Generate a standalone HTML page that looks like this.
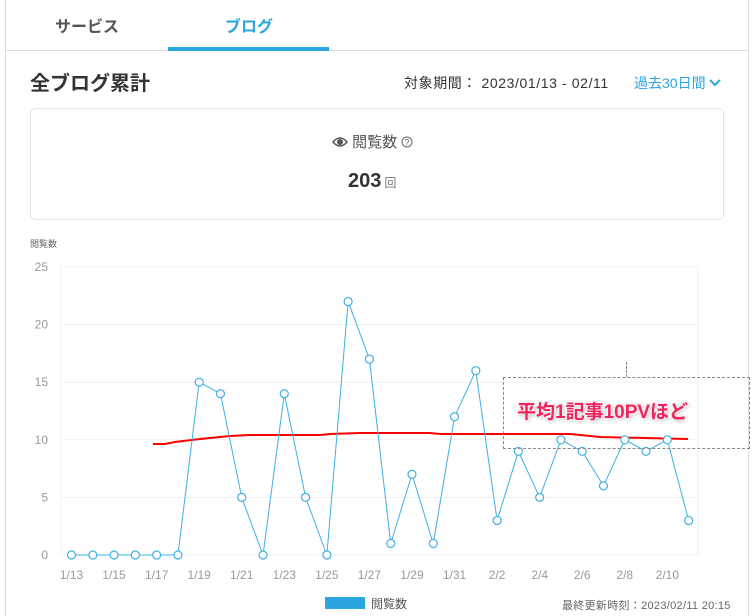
<!DOCTYPE html>
<html><head><meta charset="utf-8"><style>
body{margin:0;width:754px;height:616px;background:#fff;font-family:"Liberation Sans","Noto Sans CJK JP",sans-serif;position:relative;overflow:hidden}
.abs{position:absolute}
</style></head><body>
<div class="abs" style="left:5px;top:0;width:1px;height:616px;background:#ddd"></div>
<div class="abs" style="left:748px;top:0;width:1px;height:616px;background:#ddd"></div>
<div class="abs" style="left:5px;top:50px;width:744px;height:1px;background:#ddd"></div>
<div class="abs" style="left:55px;top:13px;font-size:16px;font-weight:bold;color:#555">サービス</div>
<div class="abs" style="left:225px;top:13px;font-size:16px;font-weight:bold;color:#2aa5e0">ブログ</div>
<div class="abs" style="left:168px;top:47px;width:161px;height:4px;background:#2aa5e0"></div>
<div class="abs" style="left:30px;top:67px;font-size:20px;font-weight:bold;color:#333">全ブログ累計</div>
<div class="abs" style="left:404px;top:73px;font-size:14px;color:#333;letter-spacing:0.6px">対象期間： 2023/01/13 - 02/11</div>
<div class="abs" style="left:634px;top:73px;font-size:14px;color:#2aa5e0">過去30日間 <svg width="12" height="10" style="vertical-align:0"><path d="M1 2 L6 7 L11 2" stroke="#2aa5e0" stroke-width="2" fill="none"/></svg></div>
<div class="abs" style="left:30px;top:108px;width:692px;height:110px;border:1px solid #e5e5e5;border-radius:6px"></div>
<div class="abs" style="left:332px;top:131px;font-size:15px;color:#555"><svg width="16" height="12" style="vertical-align:-1px"><path d="M1 6 Q8 -2 15 6 Q8 14 1 6Z" fill="none" stroke="#555" stroke-width="1.5"/><circle cx="8" cy="6" r="3" fill="#555"/></svg> 閲覧数 <svg width="12" height="12" style="vertical-align:-1px"><circle cx="6" cy="6" r="5" fill="none" stroke="#666"/><text x="6" y="9.5" font-size="9" text-anchor="middle" fill="#666" font-family="Liberation Sans">?</text></svg></div>
<div class="abs" style="left:348px;top:170px;font-size:20px;font-weight:bold;color:#333">203<span style="font-size:12px;color:#777;font-weight:normal;margin-left:3px">回</span></div>
<div class="abs" style="left:30px;top:237px;font-size:9px;color:#666">閲覧数</div>
<svg id="ch" class="abs" style="left:0;top:0" width="754" height="616" font-family="Liberation Sans" font-size="12"></svg>
<div class="abs" style="left:325px;top:597px;width:40px;height:12px;background:#2aa5e0"></div>
<div class="abs" style="left:371px;top:595px;font-size:12px;color:#555">閲覧数</div>
<div class="abs" style="left:562px;top:597px;font-size:11px;color:#666;letter-spacing:0.3px">最終更新時刻：2023/02/11 20:15</div>
<div class="abs" style="left:503px;top:377px;width:245px;height:70px;border:1px dashed #888"></div>
<div class="abs" style="left:626px;top:362px;width:0;height:15px;border-left:1px dashed #888"></div>
<div class="abs" style="left:517px;top:397px;font-size:19px;font-weight:bold;color:#f0245e;text-shadow:0 0 2px #fff,0 0 3px #fff,1px 1px 4px #999">平均1記事10PVほど</div>
<script>
var s='',v=[0,0,0,0,0,0,15,14,5,0,14,5,0,22,17,1,7,1,12,16,3,9,5,10,9,6,10,9,10,3];
function X(i){return 71.5+i*21.28}function Y(n){return 555-n*11.52}
for(var k=0;k<=5;k++){var y=Y(k*5);s+='<line x1="61" x2="698" y1="'+y+'" y2="'+y+'" stroke="#f0f0f0"/>';s+='<text x="48" y="'+(y+4)+'" text-anchor="end" fill="#999">'+(k*5)+'</text>';}
s+='<line x1="61" x2="61" y1="267" y2="555" stroke="#f0f0f0"/><line x1="698" x2="698" y1="267" y2="555" stroke="#f0f0f0"/>';
var lab=['1/13','1/15','1/17','1/19','1/21','1/23','1/25','1/27','1/29','1/31','2/2','2/4','2/6','2/8','2/10'];
for(var i=0;i<15;i++)s+='<text x="'+X(i*2)+'" y="579" text-anchor="middle" fill="#999">'+lab[i]+'</text>';
s+='<polyline fill="none" stroke="#f00" stroke-width="2" points="153,444 165,444 175,442 200,439 230,436 250,435 320,435 330,434 360,433 430,433 440,434 570,434 580,435 600,437 688,439"/>';
var p='';for(i=0;i<30;i++)p+=X(i)+','+Y(v[i])+' ';
s+='<polyline fill="none" stroke="#3fb0e3" stroke-width="1" points="'+p+'"/>';
for(i=0;i<30;i++)s+='<circle cx="'+X(i)+'" cy="'+Y(v[i])+'" r="4" fill="#fff" stroke="#3fb0e3" stroke-width="1.2"/>';
document.getElementById('ch').innerHTML=s;
</script>
</body></html>
